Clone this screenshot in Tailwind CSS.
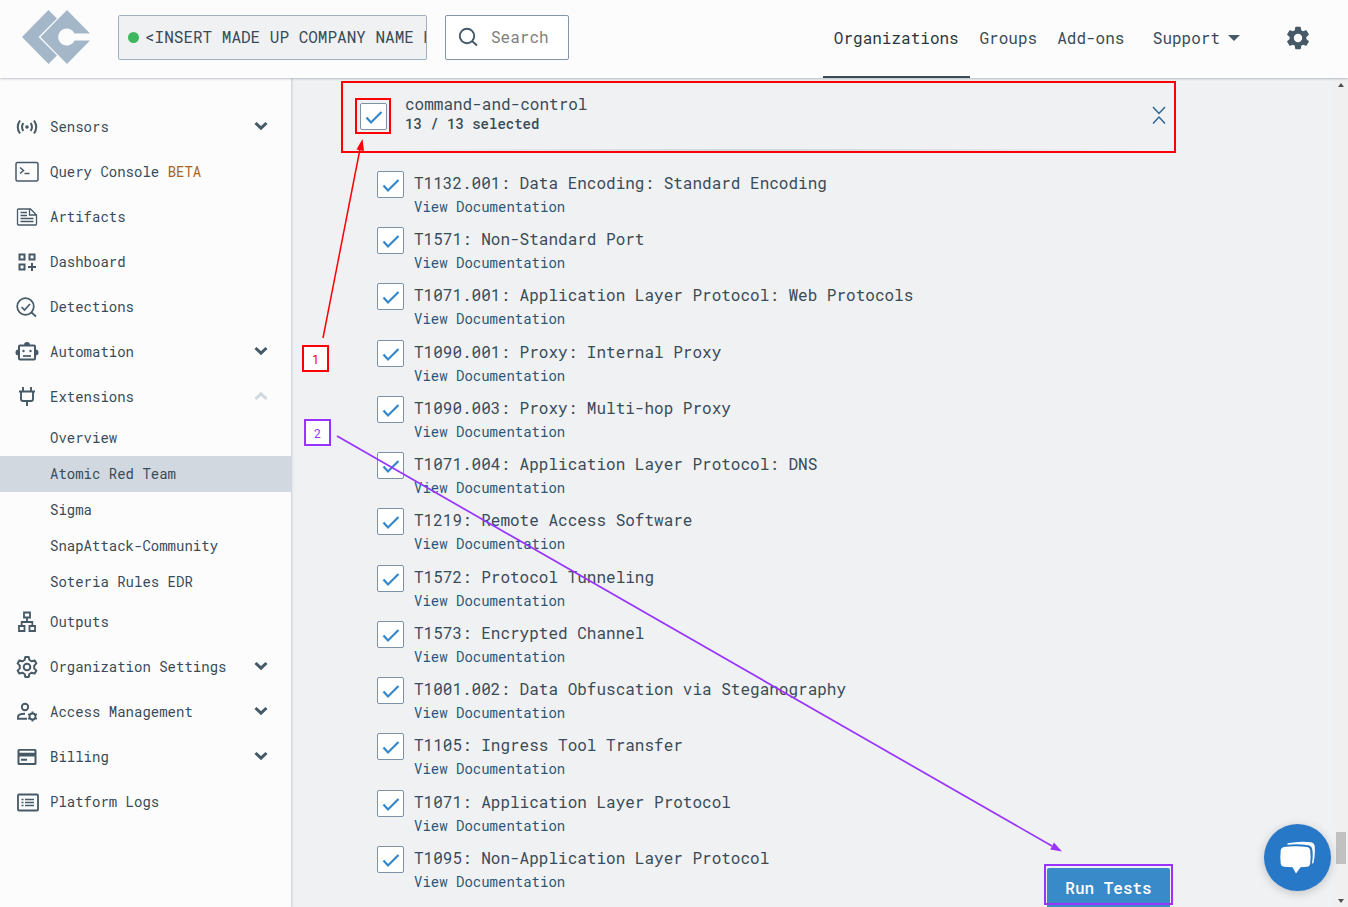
<!DOCTYPE html>
<html lang="en">
<head>
<meta charset="utf-8">
<title>Atomic Red Team</title>
<script src="https://cdn.jsdelivr.net/npm/@tailwindcss/browser@4"></script>
</head>
<body class="relative flex h-screen flex-col overflow-hidden bg-[#f0f1f3] font-['Roboto_Mono','Liberation_Mono',monospace] text-[#394b59]">

<svg class="hidden">
  <symbol id="check" viewBox="0 0 27 27"><path d="M6.500 14.500l4.500 5L21.500 9" fill="none" stroke="#3487c9" stroke-width="2.200"/></symbol>
  <symbol id="down" viewBox="0 0 14 10"><path d="M1.500 2l5.500 5.200L12.500 2" fill="none" stroke="currentColor" stroke-width="3"/></symbol>
</svg>

<header class="relative z-10 flex h-[78px] shrink-0 items-center bg-[#fcfcfc] shadow-[0_1px_2px_rgba(40,60,80,0.3)]">
  <a href="#" aria-label="Home" class="ml-[22px] w-[68px] shrink-0 -mt-1">
    <svg width="68" height="54" viewBox="0 0 68 54" fill="#a4b7c8"><path d="M26.500 0l8.500 8.500L16.500 27 35 45.500 26.500 54 0 27z"/><path d="M45 0l23 23.500H52.500a8.500 8.500 0 1 0 0 7H68L45 54 18.500 27z"/></svg>
  </a>
  <button class="-mt-1 ml-7 flex h-[45px] w-[309px] shrink-0 items-center gap-1.5 overflow-hidden rounded-xs border border-[#a0b0c0] bg-[#f0f1f3] pl-[9px] text-base">
    <span class="size-[11px] shrink-0 rounded-full bg-[#3db861]"></span>
    <span class="overflow-hidden whitespace-nowrap">&lt;INSERT MADE UP COMPANY NAME HERE&gt;</span>
  </button>
  <label class="-mt-1 ml-[18px] flex h-[45px] w-[124px] shrink-0 items-center gap-3 rounded-xs border border-[#8496a8] bg-white pl-3 pr-2">
    <svg class="shrink-0" width="21" height="20" viewBox="0 0 21 20" fill="none" stroke="#465967" stroke-width="1.900"><circle cx="9" cy="9" r="7.200"/><path d="M14 14l5 4.500"/></svg>
    <input type="text" aria-label="Search" placeholder="Search" class="w-full min-w-0 bg-transparent text-base outline-none placeholder:text-[#808080]">
  </label>
  <nav class="ml-auto flex h-full items-center text-base">
    <a href="#" class="flex h-full w-[147px] items-center justify-center border-b-2 border-[#394b59] text-[#293742]">Organizations</a>
    <a href="#" class="-mt-0.5 w-[77px] text-center">Groups</a>
    <a href="#" class="-mt-0.5 w-[88px] text-center">Add-ons</a>
    <button class="-mt-0.5 ml-[18px] flex items-center gap-2">Support
      <svg width="12" height="6" viewBox="0 0 12 6" fill="#465967"><path d="M0 0h12L6 6z"/></svg>
    </button>
    <button aria-label="Settings" class="-mt-0.5 ml-11 mr-9">
      <svg width="28" height="28" viewBox="0 0 24 24" fill="#465967"><path d="M19.140 12.940c.04-.3.060-.61.060-.94s-.02-.64-.07-.94l2.030-1.580a.49.490 0 0 0 .12-.61l-1.920-3.320a.488.488 0 0 0-.59-.22l-2.390.96a7 7 0 0 0-1.620-.94l-.36-2.540a.484.484 0 0 0-.48-.41h-3.840a.47.470 0 0 0-.47.410l-.36 2.540c-.59.240-1.130.570-1.620.940l-2.390-.96a.47.470 0 0 0-.59.220L2.740 8.870c-.12.210-.08.470.12.610l2.030 1.580c-.05.3-.09.630-.09.940s.02.640.07.940l-2.030 1.580a.49.490 0 0 0-.12.610l1.920 3.320c.12.220.370.290.590.220l2.390-.96c.5.380 1.030.7 1.620.940l.36 2.540c.05.240.240.410.480.410h3.840c.24 0 .44-.17.470-.41l.36-2.540c.59-.24 1.130-.56 1.620-.94l2.390.96c.22.080.470 0 .59-.22l1.920-3.320a.47.470 0 0 0-.12-.61zM12 15.600a3.600 3.600 0 1 1 0-7.200 3.600 3.600 0 0 1 0 7.200z"/></svg>
    </button>
  </nav>
</header>

<div class="flex min-h-0 flex-1">
  <nav id="side" class="flex w-[292px] shrink-0 flex-col border-r border-[#d4d8dc] bg-[#fcfcfc] pt-[27px] text-sm shadow-sm"></nav>

  <main class="relative flex min-w-0 flex-1 flex-col pl-[49px] pr-[158px]">
    <section class="relative mt-[3px] flex h-[72px] shrink-0 items-center border-2 border-[#fd0003] pl-3 pr-2">
      <span class="-mt-0.5 flex size-9 items-center justify-center border-2 border-[#fd0003]">
        <span class="relative size-[27px]">
          <input id="all" type="checkbox" checked class="block size-full appearance-none rounded-xs border border-[#7d92a5] bg-white">
          <svg class="pointer-events-none absolute inset-0 size-full"><use href="#check"/></svg>
        </span>
      </span>
      <label for="all" class="-mt-1.5 ml-[14px] flex flex-1 flex-col">
        <span class="text-base leading-5">command-and-control</span>
        <span class="text-sm font-medium leading-5">13 / 13 selected</span>
      </label>
      <button aria-label="Collapse" class="-mt-1">
        <svg width="14" height="20" viewBox="0 0 14 20" fill="none" stroke="#2b6594" stroke-width="1.500"><path d="M1 2l6 6.500L13 2M1 18.500L7 12l6 6.500"/></svg>
      </button>
      <span class="absolute inset-x-8 bottom-0 h-[2px] bg-linear-to-r from-transparent via-[#cfd6dc] to-transparent"></span>
    </section>
    <ul id="tests" class="mt-[14px] grid min-h-0 flex-1 auto-rows-fr pb-[9px] pl-9"></ul>
    <div class="absolute bottom-0 right-[161px] h-[43px] w-[129px]">
      <button class="absolute inset-x-[3px] bottom-0 top-1 rounded-t-xs bg-[#398ac9] text-base font-medium text-white">Run Tests</button>
      <span class="pointer-events-none absolute inset-x-0 bottom-[2px] top-0 border-2 border-[#9933ff]"></span>
    </div>
  </main>

  <div class="flex w-[14px] shrink-0 flex-col items-center bg-[#f0f0f0] pt-[5px] pb-1" aria-hidden="true">
    <svg width="6" height="4" viewBox="0 0 6 4" fill="#505050"><path d="M0 4h6L3 0z"/></svg>
    <span class="mt-auto h-8 w-[10px] bg-[#c1c1c1]"></span>
    <svg class="mt-[35px]" width="6" height="4" viewBox="0 0 6 4" fill="#505050"><path d="M0 0h6L3 4z"/></svg>
  </div>
</div>

<!-- Callouts over the content -->
<svg class="pointer-events-none absolute left-0 top-0 z-20" width="1348" height="907" fill="none">
  <path d="M323 338L360 149" stroke="#fd0003" stroke-width="1.500"/><path d="M362.500 139l-6 10.500 7.500 1.500z" fill="#fd0003"/>
  <path d="M337 436L1052 846" stroke="#9933ff" stroke-width="1.700"/><path d="M1062 851.500l-8-9-3.800 7z" fill="#9933ff"/>
</svg>
<span class="absolute left-[302px] top-[345px] z-20 flex size-[27px] items-center justify-center border-2 border-[#fd0003] bg-white text-xs text-[#fd0003]">1</span>
<span class="absolute left-[304px] top-[419px] z-20 flex size-[27px] items-center justify-center border-2 border-[#9933ff] bg-white text-xs text-[#9933ff]">2</span>

<button aria-label="Open chat" class="absolute bottom-4 right-[17px] z-20 flex size-[67px] items-center justify-center rounded-full bg-[#2878c8] shadow-[0_2px_10px_rgba(0,0,0,0.2)]">
  <svg width="36" height="34" viewBox="0 0 36 34"><path d="M4 6Q15 4.500 27 6q3 .5 3.200 3.500.8 6 0 13-.3 3-3.200 3.200l-6.500.6-4.500 6.200-3.500-6.200L4 25.700Q1 25.300.7 22.500 0 16 .7 9.500 1 6.500 4 6z" fill="#fff"/><path d="M7.500 2.300Q20-.3 31 1.200q3.200.5 3.600 3.500 1 8-1.200 17.500l-1.400.3q1.300-8 .3-14-.4-3.500-4-4.200Q18 2.500 7.500 3.800z" fill="#fff"/></svg>
</button>

<script>
const icons = {
  Sensors: '<g fill="none" stroke="currentColor" stroke-width="2"><path d="M5 5.500Q.5 12 5 18.500M19 5.500q4.500 6.500 0 13M8.300 8Q5.800 12 8.300 16M15.700 8q2.500 4 0 8"/></g><circle cx="12" cy="12" r="1.800"/>',
  'Query Console': '<g fill="none" stroke="currentColor" stroke-width="1.500"><rect x="1" y="2.500" width="22" height="18.500" rx="1.500"/><path d="M5 7.500L8.500 10.500 5 13.500M9.500 13.500h5"/></g>',
  Artifacts: '<g fill="none" stroke="currentColor" stroke-width="1.300"><path d="M3.500 4h12l6 6v9q0 1-1 1h-17q-1 0-1-1V5q0-1 1-1zM14.500 4v6h7M5.500 7.500H12M5.500 10.500H12M5.500 13.500h13M5.500 16.500h13"/></g>',
  Dashboard: '<g fill="none" stroke="currentColor" stroke-width="2"><path d="M4.500 4.500h5v5h-5zM14.500 4.500h5v5h-5zM4.500 14.500h5v5h-5zM17 13v8M13 17h8"/></g>',
  Detections: '<g fill="none" stroke="currentColor" stroke-width="1.700"><circle cx="10.500" cy="11.500" r="8.300"/><path d="M16.500 17.500l4.500 4M6.500 12l3 3 5.500-6"/></g>',
  Automation: '<g fill="none" stroke="currentColor" stroke-width="2"><path d="M5 5.500h14q1 0 1 1v12q0 1-1 1H5q-1 0-1-1v-12q0-1 1-1z"/><path d="M8 16h8" stroke-width="1.700"/></g><path d="M9 5a3 3 0 0 1 6 0zM3.500 9.500v6a3 3 0 0 1 0-6zM20.500 9.500v6a3 3 0 0 0 0-6z"/><circle cx="8.500" cy="11" r="1.200"/><circle cx="15.500" cy="11" r="1.200"/>',
  Extensions: '<g fill="none" stroke="currentColor" stroke-width="1.900"><path d="M4 6.500h16M8 2v4M16 2v4M6 7v7q0 2 2 2h8q2 0 2-2V7M12 16v5"/></g>',
  Outputs: '<g fill="none" stroke="currentColor" stroke-width="1.800"><path d="M9 2.500h6v5H9zM4 16h5.500v5H4zM14.500 16H20v5h-5.500zM12 8v4M6.700 16v-4h10.600v4"/></g>',
  'Organization Settings': '<g fill="none" stroke="currentColor" stroke-width="2"><circle cx="12" cy="12" r="3.300"/><path d="M10.300 2h3.400l.7 3 2.300 1.300 3-.9 1.700 3-2.200 2.200v2.800l2.200 2.200-1.700 3-3-.9-2.300 1.300-.7 3h-3.400l-.7-3-2.300-1.300-3 .9-1.700-3 2.200-2.200v-2.800L2.600 8.400l1.700-3 3 .9L9.600 5z" stroke-linejoin="round"/></g>',
  'Access Management': '<g fill="none" stroke="currentColor" stroke-width="1.900"><circle cx="10" cy="7" r="3.200"/><path d="M12 18.700H3v-2q0-3 7-3"/><circle cx="17.500" cy="16.500" r="3"/></g><g stroke="currentColor" stroke-width="1.800"><path d="M17.500 11.500v2M17.500 19.500v2M13.200 14l1.700 1M20.100 18l1.700 1M13.200 19l1.700-1M20.100 15l1.700-1"/></g>',
  Billing: '<path fill-rule="evenodd" d="M4 4h16q1.500 0 1.500 1.500v13Q21.500 20 20 20H4q-1.500 0-1.500-1.500v-13Q2.500 4 4 4zM4.500 5.700v2h15v-2zM4.500 11.500V18h15v-6.500zM6 13.800h6v1.900H6z"/>',
  'Platform Logs': '<g fill="none" stroke="currentColor" stroke-width="1.800"><rect x="3" y="4.500" width="20" height="16" rx="1"/><path d="M10 9.500h9M10 12.500h9M10 15.500h9M6.500 9.500h2M6.500 12.500h2M6.500 15.500h2" stroke-width="1.300"/></g>'
};
const expandable = ['Sensors', 'Automation', 'Organization Settings', 'Access Management', 'Billing'];
const sub = ['Overview', 'Atomic Red Team', 'Sigma', 'SnapAttack-Community', 'Soteria Rules EDR'];
document.getElementById('side').innerHTML = Object.keys(icons).map(n => `
  <a href="#" class="flex h-[45px] shrink-0 items-center pl-[15px] pr-[23px]">
    <svg class="-mt-0.5 mr-[11px] size-6 shrink-0 text-[#465967]" viewBox="0 0 24 24" fill="currentColor">${icons[n]}</svg>
    <span class="-mt-0.5">${n}${n === 'Query Console' ? ' <span class="text-[#a66321]">BETA</span>' : ''}</span>
    ${expandable.includes(n) ? '<svg class="-mt-[3px] ml-auto h-[10px] w-[14px] text-[#465967]"><use href="#down"/></svg>' : ''}
    ${n === 'Extensions' ? '<svg class="-mt-1 ml-auto h-[10px] w-[14px] rotate-180 text-[#d1d8df]"><use href="#down"/></svg>' : ''}
  </a>${n === 'Extensions' ? sub.map(s => `<a href="#" class="flex h-9 shrink-0 items-center pl-[50px] ${s === 'Atomic Red Team' ? 'bg-[#d1d8df]' : ''}">${s}</a>`).join('') : ''}`).join('');

const tests = ['T1132.001: Data Encoding: Standard Encoding', 'T1571: Non-Standard Port', 'T1071.001: Application Layer Protocol: Web Protocols', 'T1090.001: Proxy: Internal Proxy', 'T1090.003: Proxy: Multi-hop Proxy', 'T1071.004: Application Layer Protocol: DNS', 'T1219: Remote Access Software', 'T1572: Protocol Tunneling', 'T1573: Encrypted Channel', 'T1001.002: Data Obfuscation via Steganography', 'T1105: Ingress Tool Transfer', 'T1071: Application Layer Protocol', 'T1095: Non-Application Layer Protocol'];
document.getElementById('tests').innerHTML = tests.map((t, i) => `
  <li class="flex items-start">
    <span class="relative mt-1 size-[27px] shrink-0">
      <input id="t${i}" type="checkbox" checked class="block size-full appearance-none rounded-xs border border-[#7d92a5] bg-white">
      <svg class="pointer-events-none absolute inset-0 size-full"><use href="#check"/></svg>
    </span>
    <span class="ml-[10px] flex flex-col items-start">
      <label for="t${i}" class="text-base leading-8">${t}</label>
      <a href="#" class="text-sm leading-4 text-[#2b5678]">View Documentation</a>
    </span>
  </li>`).join('');
</script>
</body>
</html>
